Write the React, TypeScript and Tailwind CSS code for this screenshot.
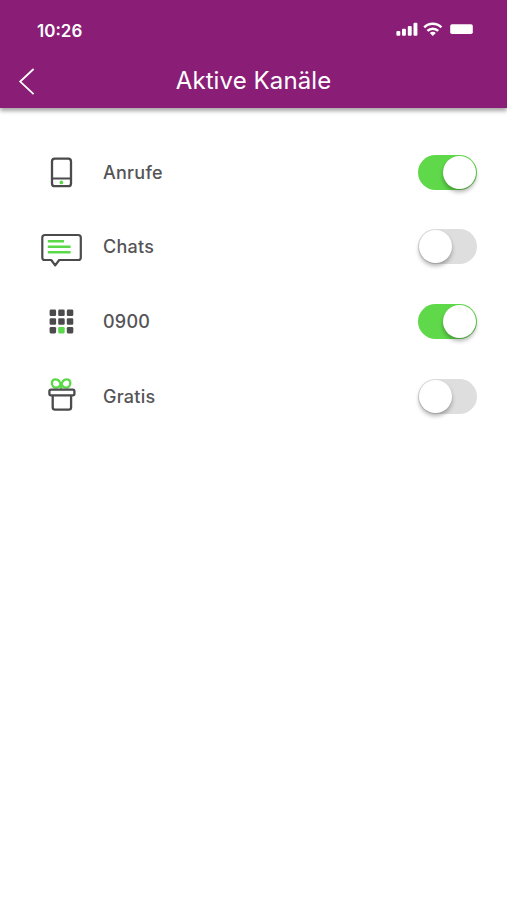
import { useState, type ReactNode } from "react";
import clsx from "clsx";

const PhoneIcon = () => (
  <svg viewBox="0 0 48 48" className="size-12" fill="none" stroke="#4b4b4d" strokeWidth="2.3">
    <rect x="14" y="10.6" width="19" height="27.6" rx="2.8" />
    <path d="M14 30.5h19" strokeWidth="2" />
    <circle cx="23.4" cy="34.4" r="1.9" fill="#5cd94a" stroke="none" />
  </svg>
);

const ChatIcon = () => (
  <svg viewBox="0 0 48 48" className="size-12" fill="none" stroke="#4b4b4d" strokeWidth="2.2" strokeLinejoin="round">
    <path d="M6.9 12h33.3a2.6 2.6 0 0 1 2.6 2.6v19.8a2.6 2.6 0 0 1-2.6 2.6H21.2L17.2 42.4 13.2 37H6.9a2.6 2.6 0 0 1-2.6-2.6V14.6A2.6 2.6 0 0 1 6.9 12Z" />
    <path d="M9.8 18.2H26M9.8 23.8h22.8M9.8 29.2h22.8" stroke="#5cd94a" strokeWidth="2.4" />
  </svg>
);

const KeypadIcon = () => (
  <svg viewBox="0 0 48 48" className="size-12" fill="#4b4b4d">
    {[12.6, 21.2, 29.9].map((y, row) =>
      [11.6, 20.2, 28.8].map((x, col) => (
        <rect
          key={`${row}-${col}`}
          x={x}
          y={y}
          width="6.5"
          height="6.5"
          rx="1.3"
          fill={row === 2 && col === 1 ? "#5cd94a" : undefined}
        />
      ))
    )}
  </svg>
);

const GiftIcon = () => (
  <svg viewBox="0 0 48 48" className="size-12" fill="none" stroke="#4b4b4d" strokeWidth="2.3">
    <g stroke="#5cd94a" strokeLinejoin="round">
      <path d="M23.1 15.4C22.8 10.8 20.8 7.3 17.6 7.3c-2.2 0-3.7 1.6-3.7 3.8 0 2.6 1.8 4.6 4.2 4.6 2.1 0 3.8-1.6 5-4.2" />
      <path d="M23.1 15.4c.3-4.6 2.3-8.1 5.5-8.1 2.2 0 3.7 1.6 3.7 3.8 0 2.6-1.8 4.6-4.2 4.6-2.1 0-3.8-1.6-5-4.2" />
      <path d="M23.1 11.5v5.5" />
    </g>
    <rect x="11.4" y="17.6" width="25" height="5.8" rx="1.6" />
    <path d="M14.7 23.4v11.8a2.4 2.4 0 0 0 2.4 2.4h13.6a2.4 2.4 0 0 0 2.4-2.4V23.4" />
  </svg>
);

function Toggle({ on, label, onChange }: { on: boolean; label: string; onChange: () => void }) {
  return (
    <button
      role="switch"
      aria-checked={on}
      aria-label={label}
      onClick={onChange}
      className={clsx(
        "flex h-[35px] w-[59px] items-center rounded-full px-px",
        on ? "justify-end bg-[#5fd94a]" : "justify-start bg-[#dedede]"
      )}
    >
      <span className="size-[33px] rounded-full bg-white shadow-[0_3px_4px_rgba(0,0,0,0.3)]" />
    </button>
  );
}

type Channel = { name: string; icon: ReactNode; on: boolean };

const initialChannels: Channel[] = [
  { name: "Anrufe", icon: <PhoneIcon />, on: true },
  { name: "Chats", icon: <ChatIcon />, on: false },
  { name: "0900", icon: <KeypadIcon />, on: true },
  { name: "Gratis", icon: <GiftIcon />, on: false },
];

export default function App() {
  const [channels, setChannels] = useState(initialChannels);

  const toggle = (name: string) =>
    setChannels((list) => list.map((c) => (c.name === name ? { ...c, on: !c.on } : c)));

  return (
    <div className="min-h-screen bg-white font-['Inter',sans-serif]">
      <header className="h-[108px] bg-[#8a1d76] text-white shadow-[0_3px_4px_rgba(0,0,0,0.35)]">
        {/* Status bar */}
        <div className="flex h-[60px] items-center justify-between pl-[37px] pr-[34px]">
          <span className="pt-[2px] text-[17px] font-semibold leading-none">10:26</span>
          <svg viewBox="0 0 77 16" className="h-4 w-[77px]" fill="white">
            <rect x="0.4" y="9" width="3.9" height="4.8" rx="1" />
            <rect x="6" y="6.7" width="3.9" height="7.1" rx="1" />
            <rect x="11.8" y="4" width="3.9" height="9.8" rx="1" />
            <rect x="17.5" y="0.8" width="3.9" height="13" rx="1" />
            <g fill="none" stroke="white" strokeWidth="2.5">
              <path d="M28.2 5.4a12.2 12.2 0 0 1 17.2 0" />
              <path d="M31.4 8.9a7.6 7.6 0 0 1 10.8 0" />
            </g>
            <path d="M36.8 13.9 33.8 10.9a4.2 4.2 0 0 1 6 0Z" />
            <rect x="54.2" y="2.3" width="22.6" height="9.7" rx="1.8" />
          </svg>
        </div>

        {/* Title bar */}
        <div className="grid h-[42px] grid-cols-[40px_1fr_40px] items-center">
          <button aria-label="Zurück" className="pl-[18px]">
            <svg viewBox="0 0 18 28" className="h-7 w-[18px]" fill="none" stroke="white" strokeWidth="1.8">
              <path d="M15.6 2 2.2 14.6l13.4 12.6" />
            </svg>
          </button>
          <h1 className="text-center text-[24px] leading-none tracking-[0.1px]">Aktive Kanäle</h1>
        </div>
      </header>

      <main className="pt-[27px]">
        {channels.map((c) => (
          <div key={c.name} className="flex h-[74.6px] items-center pl-[38px] pr-[30.5px]">
            {c.icon}
            <span className="ml-[17px] flex-1 text-[18px] font-medium tracking-[0.25px] text-[#545456]">{c.name}</span>
            <Toggle on={c.on} label={c.name} onChange={() => toggle(c.name)} />
          </div>
        ))}
      </main>
    </div>
  );
}
